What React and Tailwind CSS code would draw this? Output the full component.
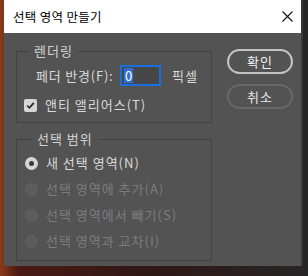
import React from "react";

function Radio({ checked, disabled, label }) {
  return (
    <div className="h-[26px] flex items-center pl-[8px]">
      {checked ? (
        <span className="w-[13px] h-[13px] rounded-full bg-[#d6d6d6] flex items-center justify-center">
          <span className="w-[5px] h-[5px] rounded-full bg-[#3a3a3a]" />
        </span>
      ) : (
        <span className="w-[13px] h-[13px] rounded-full bg-[#5c5c5c] border border-[#626262]" />
      )}
      <span
        className={
          "ml-[8px] text-[13px] leading-[16px] tracking-[1px] " +
          (disabled ? "text-[#7c7c7c]" : "text-[#dadada]")
        }
      >
        {label}
      </span>
    </div>
  );
}

export default function App() {
  return (
    <div
      className="w-[308px] h-[276px] overflow-hidden pl-[4px] pr-[5px] pb-[10px] bg-[linear-gradient(90deg,#8a3a1a_0%,#4a1a14_6%,#2e1816_50%,#262626_100%)]"
      style={{ fontFamily: '"Noto Sans CJK KR", "Noto Sans", sans-serif' }}
    >
      <div className="h-full flex flex-col border-r-2 border-[#383838]">
        <div className="h-[33px] bg-white flex items-center justify-between pl-[9px] pr-[8px] shrink-0">
          <span className="text-[12.5px] leading-[16px] tracking-[0.3px] text-black">선택 영역 만들기</span>
          <svg width="11" height="11" viewBox="0 0 11 11">
            <path d="M0.5 0.5 L10.5 10.5 M10.5 0.5 L0.5 10.5" stroke="#111" strokeWidth="1.1" />
          </svg>
        </div>
        <div className="flex-1 bg-[#535353] flex pl-[12px] pt-[10px]">
          <div className="w-[196px] flex flex-col">
            <fieldset className="border border-[#434343] px-0 pt-0 pb-[9px]">
              <legend className="ml-[12px] px-[5px] text-[13px] leading-[16px] tracking-[1px] text-[#d2d2d2]">렌더링</legend>
              <div className="mt-[6px] flex items-center h-[21px] pl-[19px]">
                <span className="w-[84px] text-[13px] leading-[16px] tracking-[0.8px] whitespace-nowrap text-[#dadada]">페더 반경(F):</span>
                <div className="w-[41px] h-[21px] border-2 border-[#1a6fe0] bg-[#474747] flex items-center pl-[2px]">
                  <span className="bg-[#2f6fd6] text-white text-[13px] leading-[15px] px-[1px]">0</span>
                </div>
                <span className="ml-[11px] text-[13px] leading-[16px] tracking-[1px] text-[#dadada]">픽셀</span>
              </div>
              <div className="mt-[11px] h-[16px] flex items-center pl-[7px]">
                <span className="w-[13px] h-[13px] rounded-[2px] bg-[#d6d6d6] flex items-center justify-center">
                  <svg width="9" height="9" viewBox="0 0 9 9">
                    <path d="M1.2 4.6 L3.5 6.8 L7.8 1.8" fill="none" stroke="#2e2e2e" strokeWidth="1.8" />
                  </svg>
                </span>
                <span className="ml-[8px] text-[13px] leading-[16px] tracking-[1px] text-[#dadada]">앤티 앨리어스(T)</span>
              </div>
            </fieldset>
            <fieldset className="mt-[8px] border border-[#434343] px-0 pt-0 pb-[6px]">
              <legend className="ml-[15px] px-[5px] text-[13px] leading-[16px] tracking-[1px] text-[#d2d2d2]">선택 범위</legend>
              <div className="mt-[3px] flex flex-col">
                <Radio checked label="새 선택 영역(N)" />
                <Radio disabled label="선택 영역에 추가(A)" />
                <Radio disabled label="선택 영역에서 빼기(S)" />
                <Radio disabled label="선택 영역과 교차(I)" />
              </div>
            </fieldset>
          </div>
          <div className="ml-[15px] w-[66px] pt-[6px] flex flex-col gap-[10px]">
            <button className="h-[25px] w-[66px] rounded-full border-2 border-[#c4c4c4] text-[13px] leading-[16px] tracking-[1px] text-[#f2f2f2]">
              확인
            </button>
            <button className="h-[25px] w-[66px] rounded-full border-2 border-[#686868] text-[13px] leading-[16px] tracking-[1px] text-[#e6e6e6]">
              취소
            </button>
          </div>
        </div>
      </div>
    </div>
  );
}
